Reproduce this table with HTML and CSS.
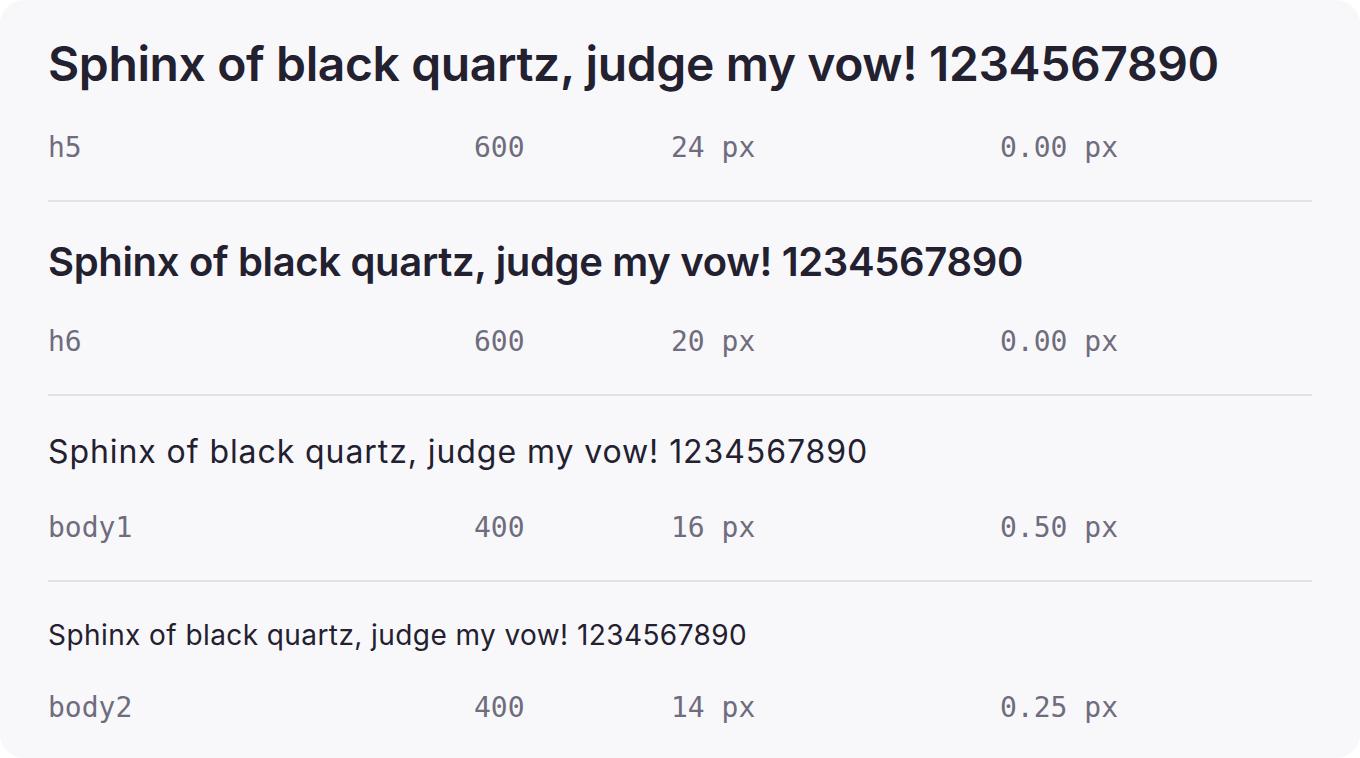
FILE: index.html
```html
<!DOCTYPE html>
<html lang="en">
<head>
<meta charset="utf-8">
<title>Typography</title>
<link rel="stylesheet" href="styles.css">
</head>
<body>
<main class="card">
  <section class="row">
    <div class="sample h5">Sphinx of black quartz, judge my vow! 1234567890</div>
    <div class="meta"><span>h5</span><span>600</span><span>24 px</span><span>0.00 px</span></div>
  </section>
  <section class="row">
    <div class="sample h6">Sphinx of black quartz, judge my vow! 1234567890</div>
    <div class="meta"><span>h6</span><span>600</span><span>20 px</span><span>0.00 px</span></div>
  </section>
  <section class="row">
    <div class="sample body1">Sphinx of black quartz, judge my vow! 1234567890</div>
    <div class="meta"><span>body1</span><span>400</span><span>16 px</span><span>0.50 px</span></div>
  </section>
  <section class="row last">
    <div class="sample body2">Sphinx of black quartz, judge my vow! 1234567890</div>
    <div class="meta"><span>body2</span><span>400</span><span>14 px</span><span>0.25 px</span></div>
  </section>
</main>
</body>
</html>
```

FILE: styles.css
```css
html, body {
  margin: 0;
  padding: 0;
  background: #ffffff;
}

.card {
  background: #f8f8fb;
  border-radius: 24px;
  padding: 0 48px;
  height: 758px;
  box-sizing: border-box;
  overflow: hidden;
}

.row {
  display: flex;
  flex-direction: column;
  gap: 32px;
  padding: 32px 0 32px;
  border-bottom: 2px solid #e2e2e8;
}

.row.last {
  border-bottom: none;
}

.sample {
  font-family: Inter, "Noto Sans", sans-serif;
  color: #23202f;
  white-space: nowrap;
}

.h5 {
  font-size: 48px;
  font-weight: 600;
  line-height: 64px;
  letter-spacing: -0.38px;
}

.h6 {
  font-size: 40px;
  font-weight: 600;
  line-height: 56px;
  letter-spacing: -0.33px;
}

.body1 {
  font-size: 32px;
  font-weight: 400;
  line-height: 48px;
  letter-spacing: 0.92px;
}

.body2 {
  font-size: 28px;
  font-weight: 400;
  line-height: 42px;
  letter-spacing: 0.42px;
}

.meta {
  display: grid;
  grid-template-columns: 426px 197px 329px 1fr;
  font-family: "DejaVu Sans Mono", "Liberation Mono", monospace;
  font-size: 28px;
  line-height: 40px;
  color: #6f6c7d;
}
```
